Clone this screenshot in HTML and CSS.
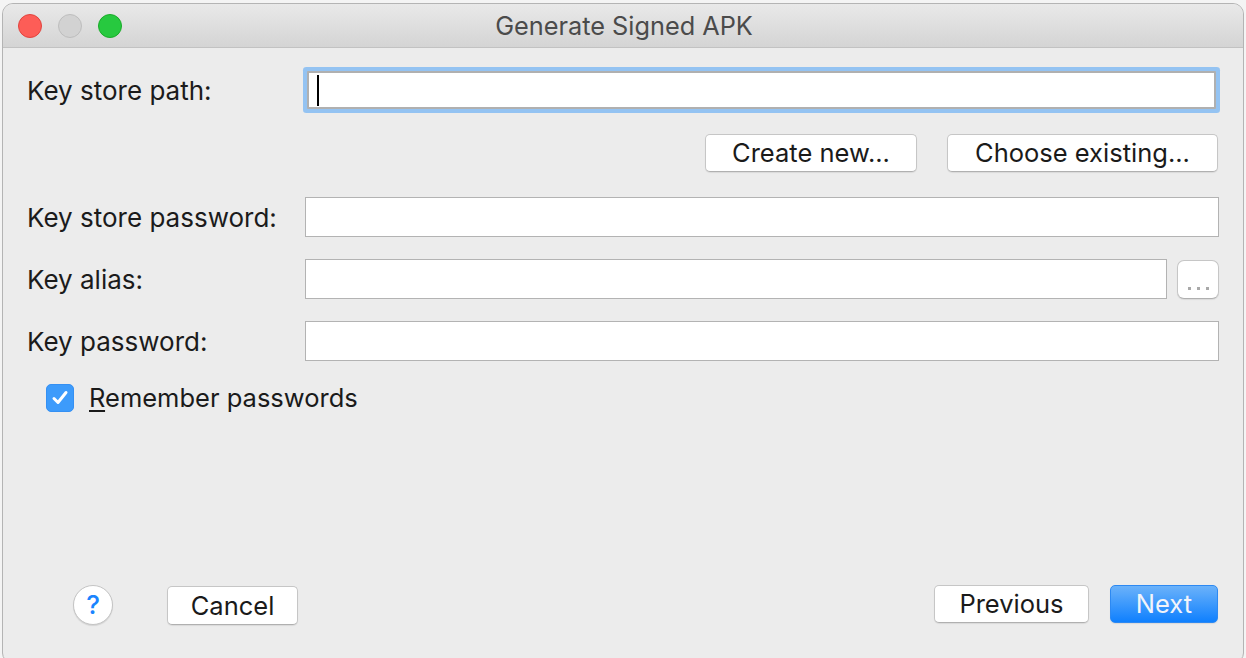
FILE: index.html
```html
<!DOCTYPE html>
<html>
<head>
<meta charset="utf-8">
<title>Generate Signed APK</title>
<link rel="stylesheet" href="styles.css">
</head>
<body>
<div class="window">
  <div class="titlebar">
    <div class="lights">
      <span class="light red"></span>
      <span class="light gray"></span>
      <span class="light green"></span>
    </div>
    <div class="title">Generate Signed APK</div>
    <div></div>
  </div>
  <div class="content">
    <div class="row first">
      <label class="label">Key store path:</label>
      <div class="field focus"><span class="caret"></span></div>
    </div>
    <div class="actions">
      <button class="btn create">Create new...</button>
      <button class="btn choose">Choose existing...</button>
    </div>
    <div class="row r3">
      <label class="label">Key store password:</label>
      <div class="field"></div>
    </div>
    <div class="row r4">
      <label class="label">Key alias:</label>
      <div class="field"></div>
      <button class="btn more" aria-label="..."><span class="dot"></span><span class="dot"></span><span class="dot"></span></button>
    </div>
    <div class="row r5">
      <label class="label">Key password:</label>
      <div class="field"></div>
    </div>
    <div class="check">
      <span class="box">
        <svg width="20" height="18" viewBox="0 0 20 18"><path d="M4 9.5 L8 13.5 L16 3.5" fill="none" stroke="#fff" stroke-width="3" stroke-linecap="round" stroke-linejoin="round"/></svg>
      </span>
      <span class="check-text"><u>R</u>emember passwords</span>
    </div>
    <div class="grow"></div>
    <div class="footer">
      <button class="help">?</button>
      <button class="btn cancel">Cancel</button>
      <div class="grow"></div>
      <button class="btn previous">Previous</button>
      <button class="btn next">Next</button>
    </div>
  </div>
</div>
</body>
</html>
```

FILE: styles.css
```css
html, body {
  margin: 0;
  padding: 0;
  height: 100%;
}
body {
  background: #f4f4f4;
  font-family: Inter, "Liberation Sans", Arial, sans-serif;
  overflow: hidden;
}
.window {
  margin: 3px 2px 0 2px;
  height: 660px;
  box-sizing: border-box;
  border: 1px solid #b4b4b4;
  border-radius: 11px 11px 10px 10px;
  background: #ececec;
  display: flex;
  flex-direction: column;
  overflow: hidden;
}
.titlebar {
  height: 43px;
  flex: none;
  border-bottom: 1px solid #c2c2c2;
  background: linear-gradient(#e9e9e9, #d4d4d4);
  display: grid;
  grid-template-columns: 1fr auto 1fr;
  align-items: center;
}
.lights {
  display: flex;
  gap: 16px;
  padding-left: 15px;
}
.light {
  width: 24px;
  height: 24px;
  border-radius: 50%;
  box-sizing: border-box;
}
.red { background: #fd5d57; border: 1px solid #e0443e; }
.gray { background: #d2d2d2; border: 1px solid #bdbdbd; }
.green { background: #27c93f; border: 1px solid #1aab29; }
.title {
  font-size: 25.3px;
  color: #4b4b4b;
  padding-left: 2px;
}
.content {
  flex: 1;
  display: flex;
  flex-direction: column;
  padding: 0 24px 37px 24px;
}
.row {
  display: flex;
  align-items: center;
}
.label {
  width: 278px;
  flex: none;
  font-size: 26px;
  color: #1b1b1b;
}
.field {
  flex: 1;
  height: 40px;
  box-sizing: border-box;
  background: #fff;
  border: 1.5px solid #b3b3b3;
  display: flex;
  align-items: center;
}
.first { margin-top: 23px; }
.field.focus {
  height: 38px;
  margin: 0 3px 0 2px;
  border: 2px solid #b0b0b0;
  box-shadow: 0 0 0 4px #94c3f2;
  border-radius: 1px;
}
.caret {
  width: 2px;
  height: 31px;
  background: #000;
  margin-left: 8px;
}
.actions {
  display: flex;
  justify-content: flex-end;
  gap: 30px;
  margin-top: 25px;
  padding-right: 1px;
}
.btn {
  font-family: inherit;
  font-size: 25.5px;
  color: #1a1a1a;
  background: #fff;
  border: 1px solid #c6c6c6;
  border-bottom-color: #b0b0b0;
  border-radius: 5px;
  box-shadow: 0 1px 1px rgba(0,0,0,0.08);
  height: 38px;
  padding: 0;
  line-height: 36px;
}
.create { width: 212px; }
.choose { width: 271px; }
.r3 { margin-top: 25px; }
.r4 { margin-top: 22px; }
.r5 { margin-top: 22px; }
.more {
  width: 42px;
  height: 39px;
  margin-left: 10px;
  border-radius: 7px;
  display: flex;
  align-items: flex-end;
  justify-content: center;
  gap: 6px;
  padding-bottom: 8px;
  box-sizing: border-box;
}
.dot {
  width: 3px;
  height: 3px;
  background: #a9a9a9;
}
.check {
  margin-top: 21px;
  margin-left: 19px;
  display: flex;
  align-items: center;
  gap: 15px;
}
.box {
  width: 28px;
  height: 28px;
  border-radius: 5px;
  background: #3d9bfb;
  border: 1px solid #3590f3;
  box-sizing: border-box;
  display: flex;
  align-items: center;
  justify-content: center;
}
.check-text {
  font-size: 25.5px;
  color: #1a1a1a;
}
.check-text u {
  text-decoration-thickness: 2px;
  text-underline-offset: 3px;
}
.grow { flex: 1; }
.footer {
  display: flex;
  align-items: center;
  padding-left: 46px;
}
.help {
  width: 40px;
  height: 40px;
  border-radius: 50%;
  background: #fff;
  border: 1px solid #c4c4c4;
  box-shadow: 0 1px 1px rgba(0,0,0,0.1);
  color: #1a84fe;
  font-family: inherit;
  font-size: 26px;
  font-weight: 500;
  padding: 0;
  line-height: 38px;
  margin-top: 2px;
}
.cancel {
  width: 131px;
  height: 39px;
  margin-left: 54px;
  margin-top: 3px;
}
.previous {
  width: 155px;
  margin-right: 21px;
}
.next {
  width: 108px;
  margin-right: 1px;
  background: linear-gradient(#6bb2fa, #0f80fe);
  border: 1px solid #2d89f2;
  color: #f2f4fa;
}
```
